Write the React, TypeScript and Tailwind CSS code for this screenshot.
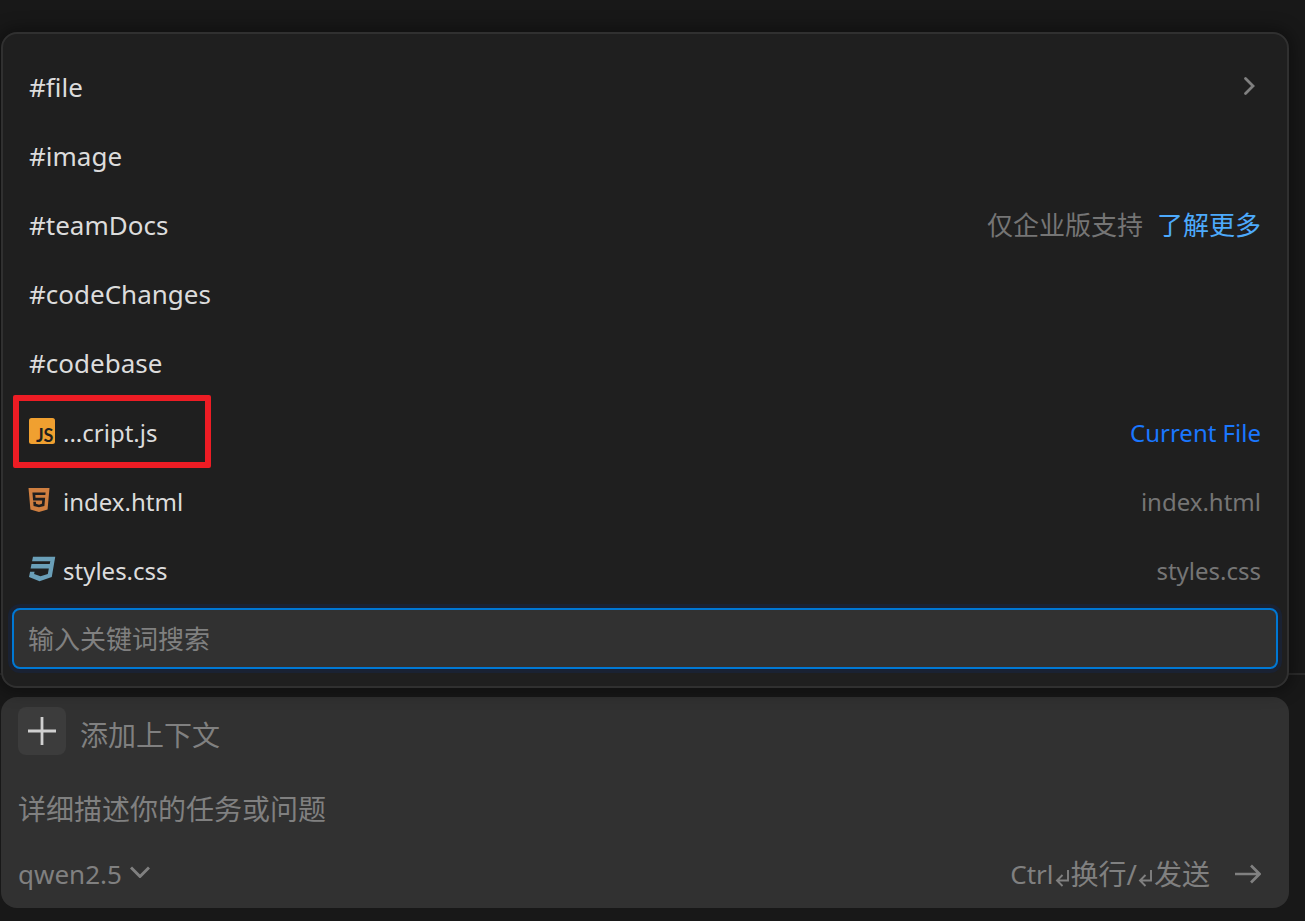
import type { ReactNode } from "react";
import { FaCss3 } from "react-icons/fa";
import { SiHtml5 } from "react-icons/si";

const commands = ["#file", "#image", "#teamDocs", "#codeChanges", "#codebase"];

function Row({ children }: { children: ReactNode }) {
  return (
    <li className="relative flex h-[69px] items-center justify-between px-[26px]">
      {children}
    </li>
  );
}

function JsIcon() {
  return (
    <svg viewBox="0 0 26 26" className="h-[26px] w-[26px]" aria-hidden="true">
      <rect width="26" height="26" rx="2.5" fill="#f0a030" />
      <text
        x="24.5"
        y="23.5"
        textAnchor="end"
        fontFamily="Lato, sans-serif"
        fontWeight="700"
        fontSize="18"
        fill="#1f1f1f"
      >
        JS
      </text>
    </svg>
  );
}

function ReturnIcon() {
  return (
    <svg
      viewBox="0 0 17 18"
      className="mt-2 h-[18px] w-[17px] flex-none"
      fill="none"
      stroke="currentColor"
      strokeWidth="1.9"
      role="img"
      aria-label="Enter"
    >
      <path d="M14 1v10.500H3.500M8.500 6 3 11.500 8.500 17" />
    </svg>
  );
}

const files = [
  {
    name: "...cript.js",
    note: "Current File",
    icon: <JsIcon />,
    current: true,
  },
  {
    name: "index.html",
    note: "index.html",
    icon: <SiHtml5 className="h-6 w-6 -ml-[2px] text-[#cf7f40]" aria-hidden="true" />,
    current: false,
  },
  {
    name: "styles.css",
    note: "styles.css",
    icon: <FaCss3 className="h-7 w-7 text-[#6a9fb8]" aria-hidden="true" />,
    current: false,
  },
];

export default function App() {
  return (
    <main className="flex min-h-screen flex-col bg-[#181818] pt-8 font-['Noto_Sans','Noto_Sans_CJK_SC',sans-serif] text-[26px] text-[#dcdcdc]">
      <section
        aria-label="Context"
        className="relative z-10 mr-4 ml-px rounded-2xl border-2 border-[#303030] bg-[#1f1f1f] pt-[19px] pb-[17px] shadow-[0_0_16px_4px_rgba(0,0,0,0.36)]"
      >
        <ul>
          {commands.map((name) => (
            <Row key={name}>
              <button type="button">{name}</button>
              {name === "#file" && (
                <svg
                  viewBox="0 0 24 24"
                  className="mb-1 h-6 w-6"
                  fill="none"
                  stroke="#808080"
                  strokeWidth="2.800"
                  strokeLinecap="round"
                  aria-hidden="true"
                >
                  <path d="M8.500 4.500 16 12 8.500 19.500" />
                </svg>
              )}
              {name === "#teamDocs" && (
                <span className="flex gap-[14px] text-[#757575]">
                  仅企业版支持
                  <a href="#more" className="text-[#4daafc]">
                    了解更多
                  </a>
                </span>
              )}
            </Row>
          ))}
          {files.map((file) => (
            <Row key={file.name}>
              <button type="button" className="flex items-center text-2xl">
                <span className="flex w-[34px] pb-1">{file.icon}</span>
                {file.name}
              </button>
              <span
                className={
                  file.current ? "text-2xl text-[#1a77ff]" : "text-2xl text-[#757575]"
                }
              >
                {file.note}
              </span>
              {file.current && (
                <span className="pointer-events-none absolute -top-[3px] left-[10px] h-[73px] w-[198px] rounded-[2px] border-6 border-[#ed1c24]" />
              )}
            </Row>
          ))}
        </ul>
        <div className="mx-[9px] mt-[3px]">
          <input
            type="text"
            aria-label="输入关键词搜索"
            placeholder="输入关键词搜索"
            className="block h-[61px] w-full rounded-lg border-2 border-[#0078d4] bg-[#313131] px-[14px] shadow-[0_0_0_4px_#1a2233] outline-none placeholder:text-[#808080]"
          />
        </div>
      </section>

      <footer className="-mt-[15px] border-t-2 border-[#2b2b2b] pt-[22px] pr-4 pb-3 pl-px">
        <form className="flex flex-col rounded-2xl bg-[#313131] px-[17px] pt-[10px] pb-[10px] text-[28px] text-[#808080]">
          <div className="flex items-start gap-[14px]">
            <button
              type="button"
              aria-label="添加上下文"
              className="flex h-12 w-12 items-center justify-center rounded-lg bg-[#3c3c3c]"
            >
              <svg
                viewBox="0 0 28 28"
                className="h-7 w-7"
                fill="none"
                stroke="#d0d0d0"
                strokeWidth="2.800"
                aria-hidden="true"
              >
                <path d="M14 0v28M0 14h28" />
              </svg>
            </button>
            <span className="pt-2 leading-10">添加上下文</span>
          </div>
          <textarea
            rows={1}
            aria-label="详细描述你的任务或问题"
            placeholder="详细描述你的任务或问题"
            className="mt-8 block h-11 w-full resize-none bg-transparent leading-11 outline-none placeholder:text-[#808080]"
          />
          <div className="mt-[19px] flex h-12 items-center justify-between">
            <label className="flex items-center gap-2">
              <select
                aria-label="Model"
                className="appearance-none bg-transparent text-[26px] outline-none"
              >
                <option>qwen2.5</option>
              </select>
              <svg
                viewBox="0 0 20 12"
                className="mb-1 h-3 w-5"
                fill="none"
                stroke="currentColor"
                strokeWidth="2.900"
                aria-hidden="true"
              >
                <path d="M1 1.500l9 9 9-9" />
              </svg>
            </label>
            <button type="submit" className="flex items-center pr-[11px]">
              <span className="text-[26px]">Ctrl</span>
              <ReturnIcon />
              <span>换行/</span>
              <ReturnIcon />
              <span>发送</span>
              <svg
                viewBox="0 0 26 20"
                className="ml-[25px] h-5 w-[26px]"
                fill="none"
                stroke="currentColor"
                strokeWidth="2.700"
                aria-hidden="true"
              >
                <path d="M0 10h24M16 1.500 24.500 10 16 18.500" />
              </svg>
            </button>
          </div>
        </form>
      </footer>
    </main>
  );
}
